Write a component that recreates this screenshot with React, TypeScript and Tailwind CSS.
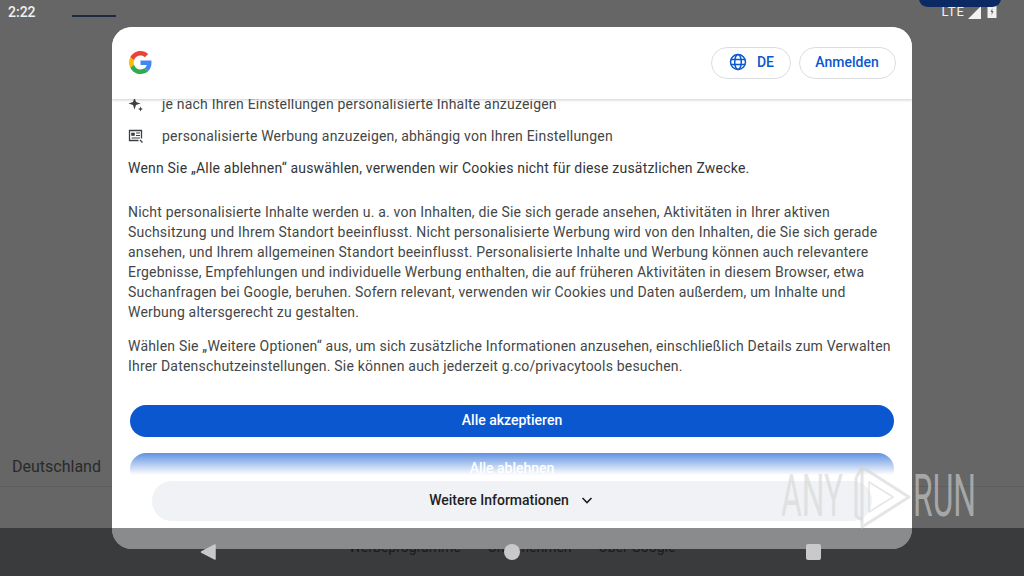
import React from "react";

const font = { fontFamily: "Roboto, sans-serif" };

function GoogleG() {
  return (
    <svg width="23" height="23" viewBox="0 0 48 48" className="mb-[2px]">
      <path fill="#EA4335" d="M24 9.5c3.54 0 6.71 1.22 9.21 3.6l6.85-6.85C35.9 2.38 30.47 0 24 0 14.62 0 6.51 5.38 2.56 13.22l7.98 6.19C12.43 13.72 17.74 9.5 24 9.5z" />
      <path fill="#4285F4" d="M46.98 24.55c0-1.57-.15-3.09-.38-4.55H24v9.02h12.94c-.58 2.96-2.26 5.48-4.78 7.18l7.73 6c4.51-4.18 7.09-10.36 7.09-17.65z" />
      <path fill="#FBBC05" d="M10.53 28.59c-.48-1.45-.76-2.99-.76-4.59s.27-3.14.76-4.59l-7.98-6.19C.92 16.46 0 20.12 0 24c0 3.88.92 7.54 2.56 10.78l7.97-6.19z" />
      <path fill="#34A853" d="M24 48c6.48 0 11.93-2.13 15.89-5.81l-7.73-6c-2.15 1.45-4.92 2.3-8.16 2.3-6.26 0-11.57-4.22-13.47-9.91l-7.98 6.19C6.51 42.62 14.62 48 24 48z" />
    </svg>
  );
}

function Sparkle() {
  return (
    <svg width="16" height="16" viewBox="0 0 16 16" fill="#3c4043">
      <path d="M6.500 1.500 8 6l4.500 1.500L8 9l-1.500 4.500L5 9 .5 7.500 5 6z" />
      <path d="M12.500 10.500l.7 1.800 1.800.7-1.800.7-.7 1.800-.7-1.800-1.800-.7 1.800-.7z" />
    </svg>
  );
}

function AdIcon() {
  return (
    <svg width="16" height="16" viewBox="0 0 16 16" fill="none" stroke="#3c4043">
      <path d="M13.500 10.500V2.500H1.500v10h9" strokeWidth="1.300" />
      <path d="M3.500 5h3v2.500h-3z" fill="#3c4043" strokeWidth="0.600" />
      <path d="M8 5h4M8 7.500h4M3.500 10h8.500" strokeWidth="1.100" />
      <path d="M12 12l2.500 2.500" strokeWidth="1.300" />
    </svg>
  );
}

function Globe() {
  return (
    <svg width="18" height="18" viewBox="0 0 18 18" fill="none" stroke="#0b57d0" strokeWidth="1.500">
      <circle cx="9" cy="9" r="7.500" />
      <ellipse cx="9" cy="9" rx="3.300" ry="7.500" />
      <path d="M2 6.500h14M2 11.500h14" />
    </svg>
  );
}

export default function App() {
  return (
    <div className="relative h-[576px] w-[1024px] overflow-hidden bg-[#666666]" style={font}>
      {/* Underlying page */}
      <div className="flex h-full flex-col">
        <div className="h-[449px]" />
        <div className="flex h-[38px] items-center border-b border-[#5e5e5e] px-3 pb-[2px] text-base text-[#2a2a2a]">
          Deutschland
        </div>
        <div className="flex h-[89px] justify-center gap-[27px] pt-[50px] text-sm leading-[20px] text-[#2a2a2a]">
          <span>Werbeprogramme</span>
          <span>Unternehmen</span>
          <span>Über Google</span>
        </div>
      </div>

      {/* Status bar */}
      <div className="absolute left-0 top-0 flex h-[24px] w-full items-center justify-between pl-2 pr-[27px] text-sm text-[#f1f1f1]">
        <span className="font-medium">2:22</span>
        <div className="flex items-center">
          <span className="text-[13px] tracking-[1px]">LTE</span>
          <svg width="13" height="13" viewBox="0 0 13 13" fill="#f1f1f1" className="ml-[3px]">
            <path d="M13 0v13H0z" />
          </svg>
          <svg width="10" height="14" viewBox="0 0 10 14" fill="#f1f1f1" className="mb-[2px] ml-[6px]">
            <path d="M3 0h4v1.500h2.500v12.500H.5V1.500H3z" />
            <path d="M5.500 4 3.500 8h1.300l-.3 3.500 2-4.500H5.200z" fill="#666666" />
          </svg>
        </div>
      </div>
      <div className="absolute left-[72px] top-[15px] h-[2px] w-[44px] bg-[#1e2a44]" />
      <div className="absolute left-[919px] top-[-10px] h-[17px] w-[82px] rounded-full bg-[#0b2a63]" />

      {/* Dialog */}
      <div className="absolute left-[112px] top-[27px] flex h-[522px] w-[800px] flex-col overflow-hidden rounded-[20px] bg-white">
        <header className="z-10 flex h-[72px] shrink-0 items-center justify-between bg-white pl-[17px] pr-[16px] shadow-[0_1px_3px_rgba(0,0,0,0.2)]">
          <GoogleG />
          <div className="flex gap-[8px] text-sm font-medium text-[#0b57d0]">
            <div className="flex h-[32px] w-[80px] items-center justify-center gap-[10px] rounded-full border border-[#dadce0] pb-[2px] pl-[1px]">
              <Globe />
              <span>DE</span>
            </div>
            <div className="flex h-[32px] w-[97px] items-center justify-center rounded-full border border-[#dadce0] pb-[2px] pr-[1px]">
              Anmelden
            </div>
          </div>
        </header>

        <div className="relative flex h-[376px] flex-col overflow-hidden px-4 text-sm leading-[20px] tracking-[0.2px] text-[#444746]">
          <div className="mt-[-11px] flex h-[32px] shrink-0 items-center gap-[18px]">
            <Sparkle />
            <span>je nach Ihren Einstellungen personalisierte Inhalte anzuzeigen</span>
          </div>
          <div className="flex h-[32px] shrink-0 items-center gap-[18px]">
            <AdIcon />
            <span>personalisierte Werbung anzuzeigen, abhängig von Ihren Einstellungen</span>
          </div>
          <p className="mt-[6px] shrink-0 text-[#333537]">
            Wenn Sie „Alle ablehnen“ auswählen, verwenden wir Cookies nicht für diese zusätzlichen Zwecke.
          </p>
          <p className="mt-[24px] shrink-0">
            Nicht personalisierte Inhalte werden u. a. von Inhalten, die Sie sich gerade ansehen, Aktivitäten in Ihrer aktiven Suchsitzung und Ihrem Standort beeinflusst. Nicht personalisierte Werbung wird von den Inhalten, die Sie sich gerade ansehen, und Ihrem allgemeinen Standort beeinflusst. Personalisierte Inhalte und Werbung können auch relevantere Ergebnisse, Empfehlungen und individuelle Werbung enthalten, die auf früheren Aktivitäten in diesem Browser, etwa Suchanfragen bei Google, beruhen. Sofern relevant, verwenden wir Cookies und Daten außerdem, um Inhalte und Werbung altersgerecht zu gestalten.
          </p>
          <p className="mt-[14px] shrink-0">
            Wählen Sie „Weitere Optionen“ aus, um sich zusätzliche Informationen anzusehen, einschließlich Details zum Verwalten Ihrer Datenschutzeinstellungen. Sie können auch jederzeit g.co/privacytools besuchen.
          </p>
          <div className="mx-[2px] mt-[29px] flex h-[32px] shrink-0 items-center justify-center rounded-full bg-[#0b57d0] pb-[2px] font-medium tracking-normal text-white">
            Alle akzeptieren
          </div>
          <div className="mx-[2px] mt-[16px] flex h-[32px] shrink-0 items-center justify-center rounded-full bg-[#0b57d0] pb-[2px] font-medium tracking-normal text-white">
            Alle ablehnen
          </div>
          <div className="absolute inset-x-0 bottom-0 h-[22px] bg-gradient-to-b from-white/35 to-white" />
        </div>

        <div className="flex h-[74px] shrink-0 justify-center bg-white px-[40px] pt-[6px]">
          <div className="flex h-[40px] w-full items-center justify-center gap-[10px] rounded-full bg-[#f0f2f5] pb-[2px] text-sm font-medium text-[#1f1f1f]">
            <span>Weitere Informationen</span>
            <svg width="16" height="16" viewBox="0 0 16 16" fill="none" stroke="#1f1f1f" strokeWidth="1.600">
              <path d="M3.500 6 8 10.500 12.500 6" />
            </svg>
          </div>
        </div>
      </div>

      {/* Navigation bar */}
      <div className="absolute bottom-0 left-0 flex h-[48px] w-full items-center justify-center bg-[#0b0c0e]/48 pr-[3px]">
        <svg width="16" height="16" viewBox="0 0 16 16" fill="#c9c9cb" className="mr-[288px]">
          <path d="M15 1v14L1.500 8z" stroke="#c9c9cb" strokeWidth="1.500" strokeLinejoin="round" />
        </svg>
        <div className="mr-[286px] h-[16px] w-[16px] rounded-full bg-[#c9c9cb]" />
        <div className="h-[16px] w-[15px] rounded-[2px] bg-[#c9c9cb]" />
      </div>

      {/* Watermark */}
      <span className="absolute left-[781px] top-[461px] origin-left scale-x-[0.54] text-[59px] font-normal leading-[70px] text-[#d4d4d4]/60">
        ANY
      </span>
      <svg width="60" height="66" viewBox="0 0 60 66" fill="none" stroke="#d4d4d4" strokeOpacity="0.6" strokeWidth="3" strokeLinejoin="round" className="absolute left-[853px] top-[464px]">
        <path d="M9 3v60l47-30z" />
        <path d="M3 14v38l6 4M9 3l-6 11" />
        <path d="M16 18v30l24-15z" strokeWidth="1.500" />
      </svg>
      <span className="absolute left-[913px] top-[461px] origin-left scale-x-[0.54] text-[59px] font-normal leading-[70px] text-[#d4d4d4]/60">
        RUN
      </span>
    </div>
  );
}
